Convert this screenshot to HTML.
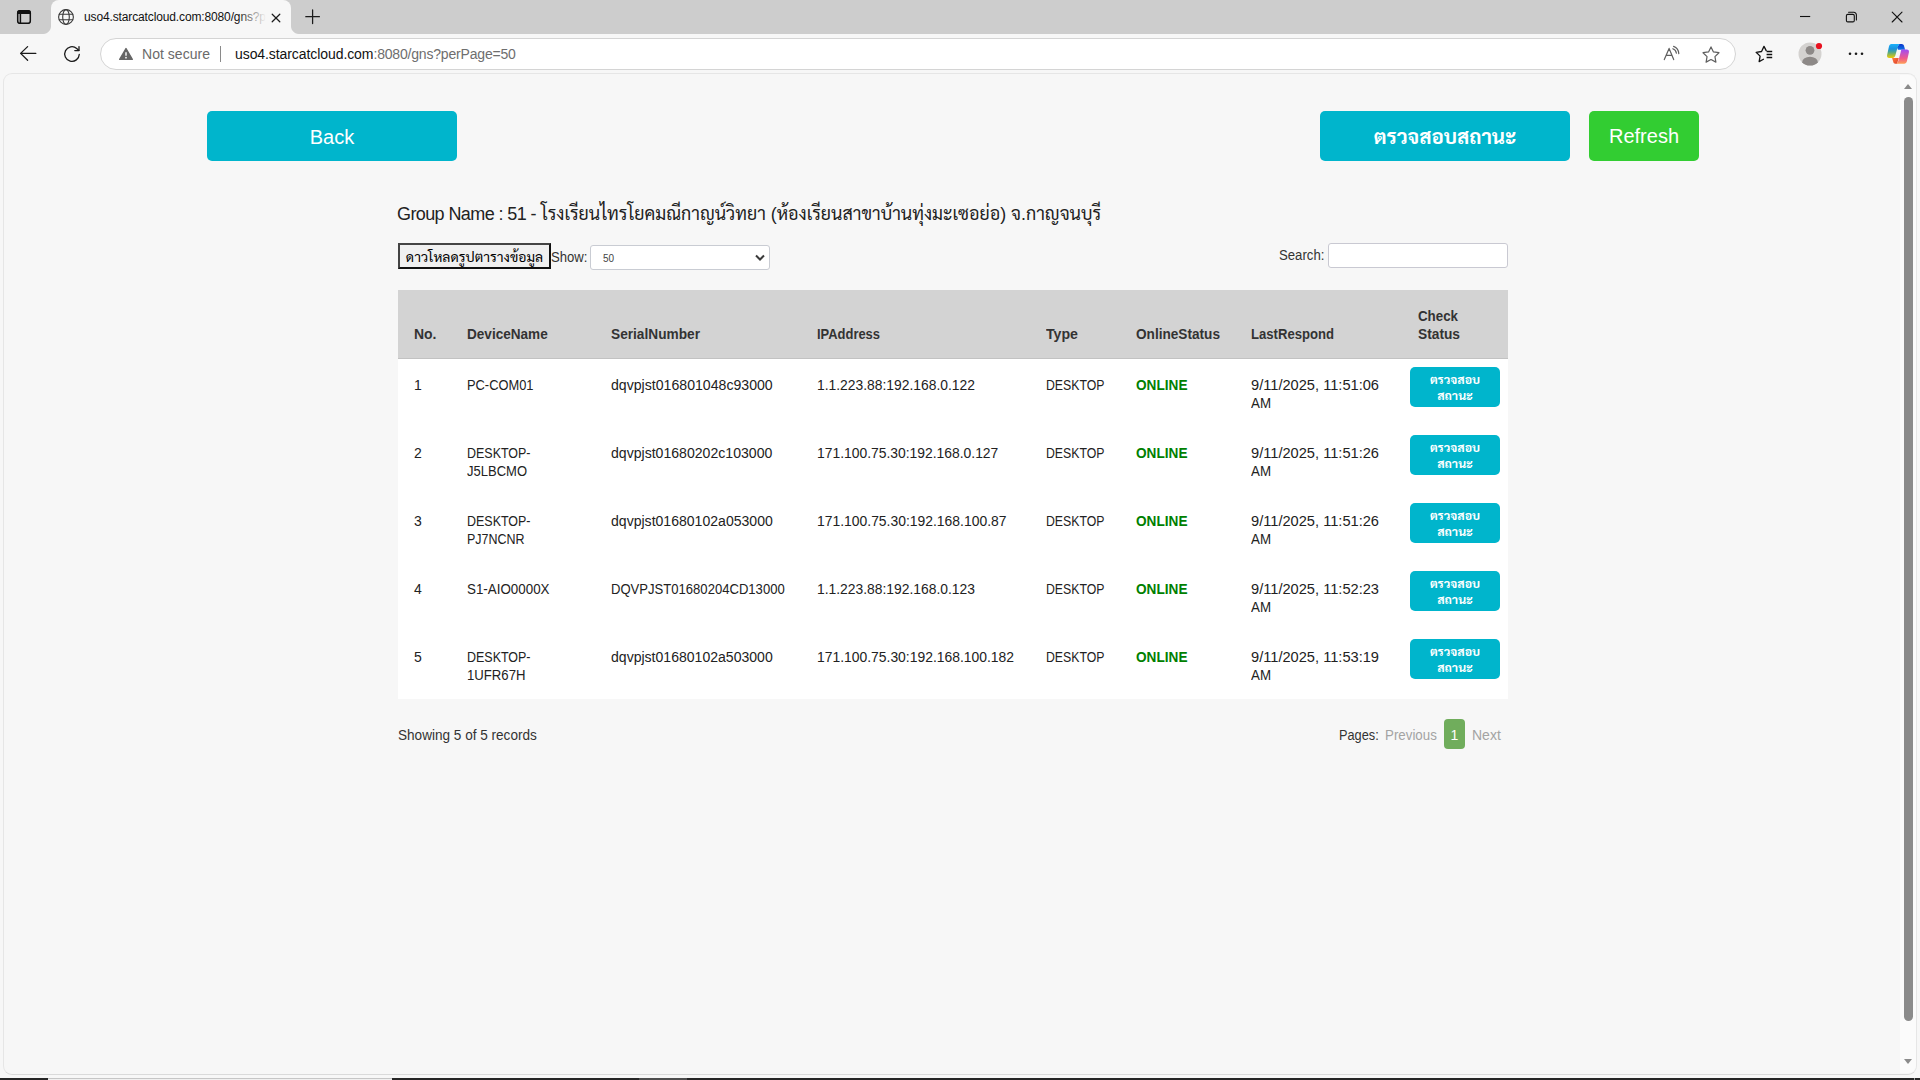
<!DOCTYPE html>
<html lang="th">
<head>
<meta charset="utf-8">
<title>uso4.starcatcloud.com:8080/gns?perPage=50</title>
<style>
*{box-sizing:border-box;margin:0;padding:0}
html,body{width:1920px;height:1080px;overflow:hidden}
body{position:relative;background:#f7f7f7;font-family:"Liberation Sans","Sarabun","Loma","Noto Sans Thai",sans-serif;color:#222}
svg{position:absolute;overflow:visible}
/* ---------- browser chrome ---------- */
#tabbar{position:absolute;left:0;top:0;width:1920px;height:34px;background:#cdcdcd}
#tab{position:absolute;left:51px;top:0;width:240px;height:34px;background:#f7f7f7;border-radius:8px 8px 0 0}
#tab:before,#tab:after{content:"";position:absolute;bottom:0;width:8px;height:8px;background:radial-gradient(circle at 0 0,transparent 7.5px,#f7f7f7 8.5px)}
#tab:before{left:-8px}
#tab:after{right:-8px;transform:scaleX(-1)}
#tabtitle{position:absolute;left:84px;top:10px;font-size:12px;line-height:15px;color:#111;white-space:nowrap;width:182px;overflow:hidden}
#tabfade{position:absolute;left:238px;top:6px;width:28px;height:22px;background:linear-gradient(90deg,rgba(247,247,247,0),#f7f7f7)}
#toolbar{position:absolute;left:0;top:34px;width:1920px;height:40px;background:#f7f7f7}
#omni{position:absolute;left:100px;top:38px;width:1636px;height:32px;border-radius:16px;background:#fff;border:1px solid #d4d4d4}
#notsecure{position:absolute;left:142px;top:46px;font-size:14px;line-height:16px;color:#6a6a6a;white-space:nowrap}
#sep{position:absolute;left:220px;top:46px;width:1px;height:16px;background:#8a8a8a}
#url{position:absolute;left:235px;top:46px;font-size:14px;line-height:16px;color:#6e6e6e;white-space:nowrap}
#url b{font-weight:normal;color:#111}
#content{position:absolute;left:3px;top:73px;width:1914px;height:1002px;border:1px solid #e6e6e6;border-bottom-color:#dadada;border-radius:9px;background:#f7f7f7}
#sbtrack{position:absolute;left:1900px;top:75px;width:16px;height:998px;background:#fbfbfb;border-radius:0 8px 8px 0}
#sbthumb{position:absolute;left:1904px;top:97px;width:9px;height:924px;border-radius:5px;background:#8b8b8b}
.tri{position:absolute;width:0;height:0;border-left:4.5px solid transparent;border-right:4.5px solid transparent}
#taskbar{position:absolute;left:0;top:1078px;width:1920px;height:2px;background:#262626}
#taskbar i{position:absolute;top:0;height:2px}
/* ---------- page ---------- */
.btn{position:absolute;border-radius:5px;color:#fff;text-align:center;white-space:nowrap}
.cy{background:#00b5cc}
#back{left:207px;top:111px;width:250px;height:50px;font-size:20px;line-height:52px}
#chk{left:1320px;top:111px;width:250px;height:50px;font-size:20.4px;line-height:52px;font-weight:bold}
#refresh{left:1589px;top:111px;width:110px;height:50px;font-size:20px;line-height:51px;background:#32cd32}
#h{position:absolute;left:397px;top:201px;font-size:18px;line-height:26px;color:#222;white-space:nowrap}
#h .thai{font-size:17.85px}
/* controls */
#dl{position:absolute;left:398px;top:243px;width:153px;height:26px;border:2px solid #111;border-top-color:#444;border-left-color:#444;background:#f0f0f0;font-size:14px;line-height:25px;color:#000;text-align:center;white-space:nowrap;overflow:hidden}
.lb{position:absolute;font-size:14px;line-height:16px;color:#333;white-space:nowrap}
#sel{position:absolute;left:590px;top:245px;width:180px;height:25px;border:1px solid #c9ccd3;border-radius:3px;background:#fff}
#sel span{position:absolute;left:12px;top:7px;font-size:10px;line-height:12px;color:#444}
#sel svg{right:3px;top:8px}
#sinput{position:absolute;left:1328px;top:243px;width:180px;height:25px;border:1px solid #c9c9d2;border-radius:3px;background:#fff}
/* table */
#thead{position:absolute;left:398px;top:290px;width:1110px;height:69px;background:#d3d3d3;border-bottom:1px solid #c2c2c2}
#tbody{position:absolute;left:398px;top:359px;width:1110px;height:340px;background:#fff}
.m{transform-origin:0 50%}
.th{position:absolute;font-size:14px;line-height:18px;font-weight:bold;color:#333;white-space:nowrap}
.td{position:absolute;font-size:14px;line-height:18px;color:#222;white-space:nowrap}
.on{color:#008000;font-weight:bold}
.sb{position:absolute;left:1410px;width:90px;height:40px;border-radius:5px;background:#00b5cc;color:#fff;font-size:12.3px;line-height:16px;font-weight:bold;text-align:center;padding-top:5px}
/* footer */
.ft{position:absolute;font-size:14px;line-height:18px;color:#333;white-space:nowrap}
.mut{color:#a3a3a3}
#pg1{position:absolute;left:1444px;top:719px;width:21px;height:30px;border-radius:4px;background:#70ad5c;color:#fff;font-size:14px;line-height:32px;text-align:center}
</style>
</head>
<body>
<div id="tabbar"></div>
<div id="tab"></div>
<div id="tabtitle"><span class="m" style="letter-spacing:-0.132px">uso4.starcatcloud.com:8080/gns?</span>p</div>
<div id="tabfade"></div>
<div id="toolbar"></div>
<div id="omni"></div>
<div id="notsecure"><span class="m" style="letter-spacing:0.033px">Not secure</span></div>
<div id="sep"></div>
<div id="url"><b><span class="m" style="letter-spacing:-0.079px">uso4.starcatcloud.com</span></b><span class="m" style="letter-spacing:-0.183px">:8080/gns?perPage=50</span></div>
<svg id="icons" width="1920" height="76" viewBox="0 0 1920 76" style="left:0;top:0" fill="none" stroke-linecap="round" stroke-linejoin="round">
<defs>
<linearGradient id="cpA" x1="0" y1="0" x2="0" y2="1"><stop offset="0" stop-color="#1ab2fb"/><stop offset=".35" stop-color="#1a92dc"/><stop offset=".58" stop-color="#4fa78e"/><stop offset=".78" stop-color="#a0bb42"/><stop offset="1" stop-color="#f2cc05"/></linearGradient>
<linearGradient id="cpB" x1="0" y1="0" x2="0" y2="1"><stop offset="0" stop-color="#9f4bf4"/><stop offset=".35" stop-color="#cf55b8"/><stop offset=".62" stop-color="#f05a8c"/><stop offset="1" stop-color="#ff9f55"/></linearGradient>
<linearGradient id="cpC" x1="0" y1="0" x2="1" y2="1"><stop offset="0" stop-color="#ff7a3c"/><stop offset="1" stop-color="#dd3f2c"/></linearGradient><linearGradient id="cpD" x1="0" y1="0" x2="0" y2="1"><stop offset="0" stop-color="#0a35cc"/><stop offset="1" stop-color="#0f72e6"/></linearGradient>
<clipPath id="avc"><circle cx="1810" cy="54" r="11.5"/></clipPath>
</defs>
<!-- tab actions -->
<g stroke="#111" stroke-width="1.5"><rect x="17.7" y="10.7" width="12.6" height="12.6" rx="2.4"/><path d="M20.4 13.5V23"/></g>
<path d="M17.7 13.3V13.1a2.4 2.4 0 0 1 2.4-2.4h7.8a2.4 2.4 0 0 1 2.4 2.4V13.3Z" fill="#111" stroke="#111" stroke-width="1.5"/>
<!-- globe favicon -->
<g stroke="#3a3a3a" stroke-width="1.1"><circle cx="66" cy="17" r="7.4"/><ellipse cx="66" cy="17" rx="3.3" ry="7.4"/><path d="M59.3 14.3H72.7M59.3 19.7H72.7"/></g>
<!-- tab close -->
<path d="M272.2 14.2l7.6 7.6M279.8 14.2l-7.6 7.6" stroke="#1b1b1b" stroke-width="1.25"/>
<!-- new tab -->
<path d="M305.8 16.7h13.6M312.6 9.9v13.6" stroke="#1b1b1b" stroke-width="1.25"/>
<!-- window controls -->
<g stroke="#111" stroke-width="1.1"><path d="M1800 16.5h10.2" stroke-linecap="butt"/>
<rect x="1846.4" y="14.4" width="7.9" height="7.5" rx="1.4"/><path d="M1848.6 12.3h5.2a2.6 2.6 0 0 1 2.6 2.6v5"/>
<path d="M1892.2 12.2l9.8 9.8M1902 12.2l-9.8 9.8"/></g>
<!-- back -->
<path d="M35.8 53.4H20.6M27.6 46.6l-7 6.8 7 6.9" stroke="#1b1b1b" stroke-width="1.3"/>
<!-- reload -->
<path d="M79.3 54.3a7.3 7.3 0 1 1-2.6-5.9l2.2 2" stroke="#1b1b1b" stroke-width="1.3"/><path d="M79 46.6v4h-4.2" stroke="#1b1b1b" stroke-width="1.3"/>
<!-- warning -->
<path d="M126 48.6l6.3 10.8h-12.6z" fill="#666" stroke="#666" stroke-width="1.4"/><path d="M126 52.2v3.6" stroke="#fff" stroke-width="1.4" stroke-linecap="butt"/><circle cx="126" cy="57.7" r=".85" fill="#fff"/>
<!-- read aloud -->
<g stroke="#5f5f5f" stroke-width="1.2"><path d="M1664.3 59.6l4.8-11.2 4.6 11.2M1666.3 55.4h5.6"/><path d="M1672.8 48.8a5.5 5.5 0 0 1 3.6 4.4M1673.6 46.4a8.2 8.2 0 0 1 5.2 7.2"/></g>
<!-- star -->
<path d="M1711 46.9l2.45 5 5.5.8-4 3.9.95 5.5-4.9-2.6-4.9 2.6.95-5.5-4-3.9 5.5-.8z" stroke="#5f5f5f" stroke-width="1.2"/>
<!-- favorites -->
<g stroke="#111" stroke-width="1.3"><path d="M1766.2 50.6l-2.2-4.2-2.45 5.1-5.4.8 3.95 3.85-.95 5.45 4.3-2.3"/><path d="M1766.6 51.5h5.6M1766.6 54.5h5.6M1766.6 57.5h5.6" stroke-linecap="butt"/></g>
<!-- avatar -->
<circle cx="1810" cy="54" r="11.5" fill="#d4d2d0"/>
<g clip-path="url(#avc)" fill="#8d8987"><circle cx="1810" cy="50.3" r="4.4"/><ellipse cx="1810" cy="62.3" rx="7.8" ry="5.6"/></g>
<circle cx="1819" cy="46" r="3.1" fill="#e8111f"/>
<!-- menu dots -->
<g fill="#1b1b1b"><circle cx="1850" cy="53.8" r="1.3"/><circle cx="1856" cy="53.8" r="1.3"/><circle cx="1862" cy="53.8" r="1.3"/></g>
<!-- copilot -->
<g stroke="none">
<path d="M1899.3 43.9H1901.7C1902.9 43.9 1903.6 44.6 1904 45.8L1905.1 49.7H1898L1897 47.5Z" fill="url(#cpD)"/>
<path d="M1891.3 43.9H1899.5C1898.2 45.4 1897.6 47 1897.1 49L1895.4 55.3C1894.9 57.2 1893.8 58.1 1892 58.1H1889.3C1887.6 58.1 1886.700 56.8 1887.100 55.1L1889 46.3C1889.3 44.800 1890.1 43.900 1891.300 43.900Z" fill="url(#cpA)"/>
<path d="M1892.1 58H1898.800L1897 63.7H1895.2C1894.2 63.700 1893.600 63.100 1893.300 62.100Z" fill="url(#cpC)"/>
<path d="M1901.9 49.6H1906.700C1908.5 49.600 1909.300 50.900 1908.900 52.600L1906.900 61.2C1906.500 62.800 1905.600 63.700 1904.200 63.700H1896.500C1897.8 62.200 1898.400 60.800 1898.900 58.800L1900.6 52.400C1901 50.700 1901.200 49.600 1901.900 49.600Z" fill="url(#cpB)"/>
</g>
</svg>

<div id="content"></div>
<div id="sbtrack"></div>
<div id="sbthumb"></div>
<div class="tri" style="left:1904px;top:84px;border-bottom:5px solid #8b8b8b"></div>
<div class="tri" style="left:1904px;top:1059px;border-top:5px solid #8b8b8b"></div>
<div id="taskbar"><i style="left:48px;width:344px;background:linear-gradient(#c6c6c6 0,#c6c6c6 1px,#f0f0f0 1px)"></i><i style="left:639px;width:48px;background:#4e4e4e"></i><i style="left:1914px;width:1px;background:#9a9a9a"></i></div>

<div class="btn cy" id="back"><span class="m" style="letter-spacing:0.010px">Back</span></div>
<div class="btn cy" id="chk">ตรวจสอบสถานะ</div>
<div class="btn" id="refresh"><span class="m" style="letter-spacing:-0.005px">Refresh</span></div>
<div id="h"><span class="m" style="letter-spacing:-0.598px">Group Name : 51 -</span> <span class="thai">โรงเรียนไทรโยคมณีกาญน์วิทยา (ห้องเรียนสาขาบ้านทุ่งมะเซอย่อ) จ.กาญจนบุรี</span></div>
<div id="dl">ดาวโหลดรูปตารางข้อมูล</div>
<div id="sel"><span>50</span><svg width="12" height="8" viewBox="0 0 12 8"><path d="M2 1.5 L6 5.5 L10 1.5" fill="none" stroke="#3a3a3a" stroke-width="2"/></svg></div>
<div id="sinput"></div>
<div id="thead"></div>
<div id="tbody"></div>
<div class="th m" style="left:414px;top:325px;transform:scaleX(0.9972)">No.</div>
<div class="th m" style="left:467px;top:325px;transform:scaleX(0.9690)">DeviceName</div>
<div class="th m" style="left:611px;top:325px;transform:scaleX(0.9775)">SerialNumber</div>
<div class="th m" style="left:817px;top:325px;transform:scaleX(0.9235)">IPAddress</div>
<div class="th m" style="left:1046px;top:325px;transform:scaleX(1.0114)">Type</div>
<div class="th m" style="left:1136px;top:325px;transform:scaleX(0.9727)">OnlineStatus</div>
<div class="th m" style="left:1251px;top:325px;transform:scaleX(0.9359)">LastRespond</div>
<div class="th m" style="left:1418px;top:307px;transform:scaleX(0.9517)">Check</div>
<div class="th m" style="left:1418px;top:325px;transform:scaleX(0.9814)">Status</div>
<div class="td m" style="left:414px;top:376px">1</div>
<div class="td m" style="left:467px;top:376px;transform:scaleX(0.9190)">PC-COM01</div>
<div class="td m" style="left:611px;top:376px;transform:scaleX(1.0083)">dqvpjst016801048c93000</div>
<div class="td m" style="left:817px;top:376px;transform:scaleX(0.9900)">1.1.223.88:192.168.0.122</div>
<div class="td m" style="left:1046px;top:376px;transform:scaleX(0.8776)">DESKTOP</div>
<div class="td on m" style="left:1136px;top:376px;transform:scaleX(0.9737)">ONLINE</div>
<div class="td m" style="left:1251px;top:376px;transform:scaleX(1.0450)">9/11/2025, 11:51:06</div>
<div class="td m" style="left:1251px;top:394px;transform:scaleX(0.9524)">AM</div>
<div class="td m" style="left:414px;top:444px">2</div>
<div class="td m" style="left:467px;top:444px;transform:scaleX(0.8904)">DESKTOP-</div>
<div class="td m" style="left:467px;top:462px;transform:scaleX(0.9291)">J5LBCMO</div>
<div class="td m" style="left:611px;top:444px;transform:scaleX(1.0058)">dqvpjst01680202c103000</div>
<div class="td m" style="left:817px;top:444px;transform:scaleX(0.9910)">171.100.75.30:192.168.0.127</div>
<div class="td m" style="left:1046px;top:444px;transform:scaleX(0.8776)">DESKTOP</div>
<div class="td on m" style="left:1136px;top:444px;transform:scaleX(0.9737)">ONLINE</div>
<div class="td m" style="left:1251px;top:444px;transform:scaleX(1.0450)">9/11/2025, 11:51:26</div>
<div class="td m" style="left:1251px;top:462px;transform:scaleX(0.9524)">AM</div>
<div class="td m" style="left:414px;top:512px">3</div>
<div class="td m" style="left:467px;top:512px;transform:scaleX(0.8904)">DESKTOP-</div>
<div class="td m" style="left:467px;top:530px;transform:scaleX(0.8904)">PJ7NCNR</div>
<div class="td m" style="left:611px;top:512px;transform:scaleX(1.0040)">dqvpjst01680102a053000</div>
<div class="td m" style="left:817px;top:512px;transform:scaleX(0.9934)">171.100.75.30:192.168.100.87</div>
<div class="td m" style="left:1046px;top:512px;transform:scaleX(0.8776)">DESKTOP</div>
<div class="td on m" style="left:1136px;top:512px;transform:scaleX(0.9737)">ONLINE</div>
<div class="td m" style="left:1251px;top:512px;transform:scaleX(1.0450)">9/11/2025, 11:51:26</div>
<div class="td m" style="left:1251px;top:530px;transform:scaleX(0.9524)">AM</div>
<div class="td m" style="left:414px;top:580px">4</div>
<div class="td m" style="left:467px;top:580px;transform:scaleX(0.9550)">S1-AIO0000X</div>
<div class="td m" style="left:611px;top:580px;transform:scaleX(0.9338)">DQVPJST01680204CD13000</div>
<div class="td m" style="left:817px;top:580px;transform:scaleX(0.9900)">1.1.223.88:192.168.0.123</div>
<div class="td m" style="left:1046px;top:580px;transform:scaleX(0.8776)">DESKTOP</div>
<div class="td on m" style="left:1136px;top:580px;transform:scaleX(0.9737)">ONLINE</div>
<div class="td m" style="left:1251px;top:580px;transform:scaleX(1.0450)">9/11/2025, 11:52:23</div>
<div class="td m" style="left:1251px;top:598px;transform:scaleX(0.9524)">AM</div>
<div class="td m" style="left:414px;top:648px">5</div>
<div class="td m" style="left:467px;top:648px;transform:scaleX(0.8904)">DESKTOP-</div>
<div class="td m" style="left:467px;top:666px;transform:scaleX(0.9398)">1UFR67H</div>
<div class="td m" style="left:611px;top:648px;transform:scaleX(1.0034)">dqvpjst01680102a503000</div>
<div class="td m" style="left:817px;top:648px;transform:scaleX(0.9923)">171.100.75.30:192.168.100.182</div>
<div class="td m" style="left:1046px;top:648px;transform:scaleX(0.8776)">DESKTOP</div>
<div class="td on m" style="left:1136px;top:648px;transform:scaleX(0.9737)">ONLINE</div>
<div class="td m" style="left:1251px;top:648px;transform:scaleX(1.0450)">9/11/2025, 11:53:19</div>
<div class="td m" style="left:1251px;top:666px;transform:scaleX(0.9524)">AM</div>
<div class="ft m" style="left:398px;top:726px;transform:scaleX(0.9693)">Showing 5 of 5 records</div>
<div class="ft m" style="left:1339px;top:726px;transform:scaleX(0.9107)">Pages:</div>
<div class="ft mut m" style="left:1385px;top:726px;transform:scaleX(0.9510)">Previous</div>
<div class="ft mut m" style="left:1472px;top:726px;transform:scaleX(1.0001)">Next</div>
<div class="lb m" style="left:551px;top:249px;transform:scaleX(0.9378)">Show:</div>
<div class="lb m" style="left:1279px;top:247px;transform:scaleX(0.9409)">Search:</div>
<div class="sb" style="top:367px">ตรวจสอบ<br>สถานะ</div>
<div class="sb" style="top:435px">ตรวจสอบ<br>สถานะ</div>
<div class="sb" style="top:503px">ตรวจสอบ<br>สถานะ</div>
<div class="sb" style="top:571px">ตรวจสอบ<br>สถานะ</div>
<div class="sb" style="top:639px">ตรวจสอบ<br>สถานะ</div>
<div id="pg1">1</div>
</body>
</html>
